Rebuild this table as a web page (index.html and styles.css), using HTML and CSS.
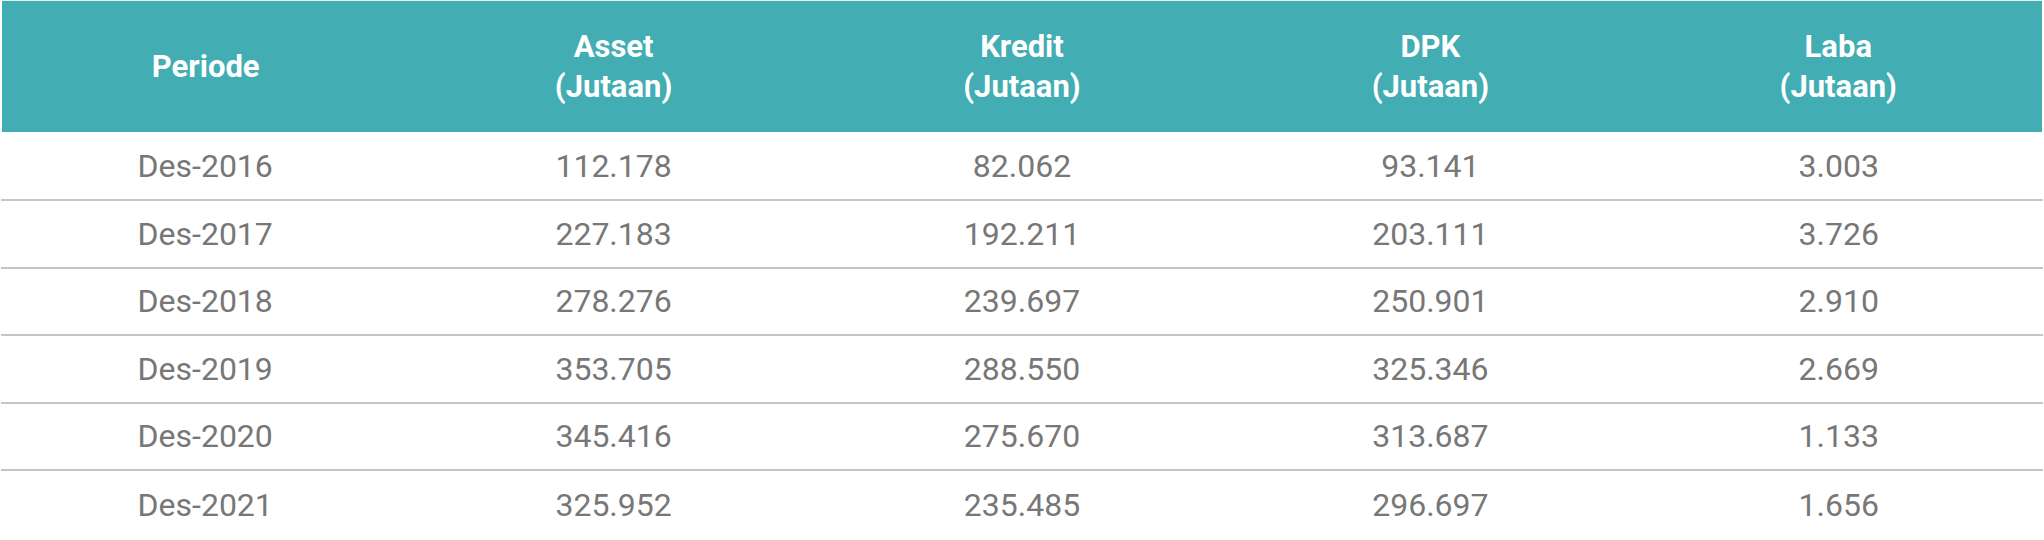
FILE: index.html
```html
<!DOCTYPE html>
<html>
<head>
<meta charset="utf-8">
<link rel="stylesheet" href="styles.css">
</head>
<body>
<table class="fin-table">
  <thead>
    <tr>
      <th>Periode</th>
      <th>Asset<br>(Jutaan)</th>
      <th>Kredit<br>(Jutaan)</th>
      <th>DPK<br>(Jutaan)</th>
      <th>Laba<br>(Jutaan)</th>
    </tr>
  </thead>
  <tbody>
    <tr><td>Des-2016</td><td>112.178</td><td>82.062</td><td>93.141</td><td>3.003</td></tr>
    <tr><td>Des-2017</td><td>227.183</td><td>192.211</td><td>203.111</td><td>3.726</td></tr>
    <tr><td>Des-2018</td><td>278.276</td><td>239.697</td><td>250.901</td><td>2.910</td></tr>
    <tr><td>Des-2019</td><td>353.705</td><td>288.550</td><td>325.346</td><td>2.669</td></tr>
    <tr><td>Des-2020</td><td>345.416</td><td>275.670</td><td>313.687</td><td>1.133</td></tr>
    <tr><td>Des-2021</td><td>325.952</td><td>235.485</td><td>296.697</td><td>1.656</td></tr>
  </tbody>
</table>
</body>
</html>
```
FILE: styles.css
```css
html, body {
  margin: 0;
  padding: 0;
  background: #ffffff;
}
.fin-table {
  width: 2044px;
  border-collapse: collapse;
  table-layout: fixed;
  font-family: Roboto, "Liberation Sans", sans-serif;
}
.fin-table th {
  background: #42adb2;
  color: #ffffff;
  font-weight: 700;
  font-size: 31px;
  line-height: 40px;
  height: 131px;
  padding: 0;
  text-align: center;
  vertical-align: middle;
  border-top: 1px solid #e3f1f2;
}
.fin-table th:first-child {
  border-left: 2px solid #ffffff;
}
.fin-table th:last-child {
  border-right: 2px solid #ffffff;
}
.fin-table td {
  color: #777777;
  font-size: 32px;
  font-weight: 400;
  height: 65.5px;
  padding: 0;
  text-align: center;
  vertical-align: middle;
  border-bottom: 2px solid #c6c6c6;
}
.fin-table tbody tr:first-child td {
  height: 67px;
}
.fin-table tbody tr:last-child td {
  border-bottom: none;
  height: 67px;
}
```
